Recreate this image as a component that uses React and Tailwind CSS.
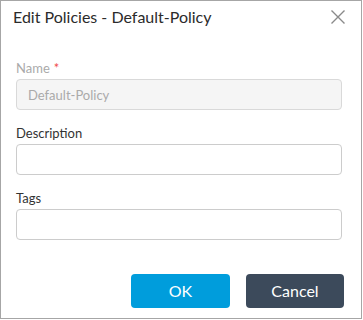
import React from "react";

const Field = ({ label, required, disabled, value }) => (
  <div className="flex flex-col">
    <label
      className={`text-[13px] leading-[16px] ${disabled ? "text-[#aaaaaa]" : "text-[#333333]"}`}
    >
      {label}
      {required && <span className="ml-1 text-[#f04a4a]">*</span>}
    </label>
    <input
      type="text"
      disabled={disabled}
      defaultValue={value}
      className={`mt-[3px] h-[31px] w-[326px] rounded-[4px] border px-[11px] text-[13px] outline-none ${
        disabled
          ? "border-[#d9d9d9] bg-[#f5f5f5] text-[#aaaaaa]"
          : "border-[#cccccc] bg-white text-[#333333]"
      }`}
    />
  </div>
);

export default function App() {
  return (
    <div className="h-[320px] w-[363px] bg-white font-['Lato','Noto_Sans',sans-serif]">
      <div className="flex h-[319px] w-[362px] flex-col border border-[#a6a6a6] bg-white">
        {/* Header */}
        <div className="flex items-center justify-between pl-[12px] pr-[15px] pt-[3px]">
          <h2 className="text-[16px] leading-[26px] text-[#2b2b2b]">Edit Policies - Default-Policy</h2>
          <button className="flex h-[16px] w-[16px] items-center justify-center">
            <svg width="16" height="16" viewBox="0 0 16 16" fill="none" stroke="#8a8a8a" strokeWidth="1.4">
              <path d="M1.5 1.5 L14.5 14.5 M14.5 1.5 L1.5 14.5" />
            </svg>
          </button>
        </div>

        {/* Body */}
        <div className="flex flex-col gap-[15px] px-[15px] pt-[30px]">
          <Field label="Name" required disabled value="Default-Policy" />
          <Field label="Description" />
          <Field label="Tags" />
        </div>

        {/* Footer */}
        <div className="mt-auto flex justify-end gap-[16px] pb-[10px] pr-[17px]">
          <button className="h-[34px] w-[99px] rounded-[4px] bg-[#009ddc] text-[16px] text-white">OK</button>
          <button className="h-[34px] w-[98px] rounded-[4px] bg-[#3c4a5b] text-[16px] text-white">Cancel</button>
        </div>
      </div>
    </div>
  );
}
